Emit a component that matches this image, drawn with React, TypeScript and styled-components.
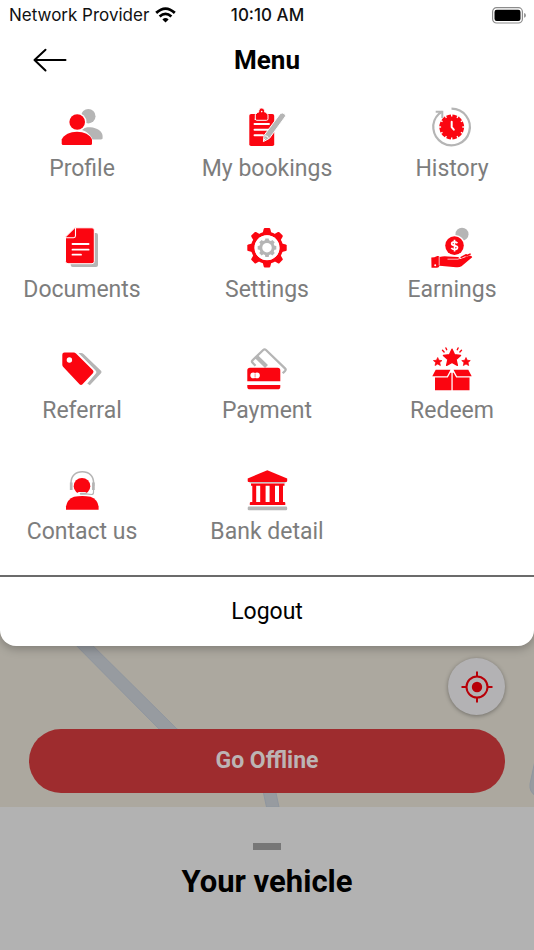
import React from "react";
import styled, { createGlobalStyle } from "styled-components";

const RED = "#fb0510";
const GRAY = "#b5b5b5";

const GlobalStyle = createGlobalStyle`
  * { box-sizing: border-box; }
  body { margin: 0; background: #b2b2b2; font-family: Roboto, "Liberation Sans", sans-serif; }
  button { font: inherit; border: 0; padding: 0; cursor: pointer; }
`;

const Screen = styled.main`
  display: flex;
  flex-direction: column;
  min-height: 100vh;
`;

const MenuSheet = styled.section`
  position: relative;
  z-index: 1;
  background: #fff;
  border-radius: 0 0 16px 16px;
  box-shadow: 0 3px 10px rgba(0, 0, 0, 0.25);
`;

const StatusBar = styled.div`
  display: grid;
  grid-template-columns: 1fr auto 1fr;
  align-items: center;
  height: 30px;
  padding: 0 8px 0 9px;
  font-family: Inter, sans-serif;
  font-size: 17px;
  line-height: 20px;
  color: #111;
`;

const Carrier = styled.div`
  display: flex;
  align-items: center;
  gap: 6px;
  white-space: nowrap;
`;

const Clock = styled.time`
  font-weight: 500;
`;

const Battery = styled.div`
  display: flex;
  justify-content: flex-end;
`;

const Header = styled.header`
  display: grid;
  grid-template-columns: 1fr auto 1fr;
  align-items: center;
  height: 60px;
  padding: 0 32px;
`;

const BackButton = styled.button`
  display: flex;
  justify-self: start;
  background: none;
`;

const Title = styled.h1`
  margin: 0;
  font-size: 26px;
  line-height: 32px;
  font-weight: 700;
  color: #000;
`;

const MenuGrid = styled.nav`
  display: grid;
  grid-template-columns: repeat(3, 1fr);
  column-gap: 35px;
  row-gap: 43px;
  padding: 15px 7px 29px;
`;

const MenuLink = styled.a`
  display: flex;
  flex-direction: column;
  align-items: center;
  gap: 6px;
  font-size: 23px;
  line-height: 28px;
  color: #7d7d7d;
  text-decoration: none;
  white-space: nowrap;
`;

const LogoutButton = styled.button`
  display: block;
  width: 100%;
  height: 71px;
  background: none;
  border-top: 2px solid #6b6b6b;
  && { font-size: 23px; }
  line-height: 28px;
  color: #000;
`;

const MapArea = styled.section`
  position: relative;
  display: flex;
  flex-direction: column;
  gap: 14px;
  margin-top: -20px;
  padding: 32px 29px 14px;
  background: #aca89f;
`;

const Roads = styled.svg`
  position: absolute;
  inset: 0;
  width: 100%;
  height: 100%;
`;

const LocateButton = styled.button`
  position: relative;
  display: flex;
  align-items: center;
  justify-content: center;
  align-self: flex-end;
  width: 57px;
  height: 57px;
  border-radius: 50%;
  background: #b3b2b4;
  box-shadow: 0 1px 4px rgba(0, 0, 0, 0.35);
`;

const OfflineButton = styled.button`
  position: relative;
  height: 64px;
  border-radius: 32px;
  background: #9e2c2e;
  && { font-size: 23px; font-weight: 700; }
  line-height: 28px;
  color: #bcb4b4;
`;

const VehicleSheet = styled.section`
  display: flex;
  flex: 1;
  flex-direction: column;
  align-items: center;
  gap: 14px;
  padding: 36px 16px 48px;
  background: #b2b2b2;
`;

const Grabber = styled.div`
  width: 28px;
  height: 7px;
  background: #777;
`;

const VehicleTitle = styled.h2`
  margin: 0;
  font-size: 31px;
  line-height: 36px;
  font-weight: 700;
  color: #000;
`;

const Icon = ({ children }: { children: React.ReactNode }) => (
  <svg width="44" height="44" viewBox="0 0 44 44" fill="none" aria-hidden="true">
    {children}
  </svg>
);

const range = (n: number) => Array.from({ length: n }, (_, i) => i);

const ProfileIcon = () => (
  <Icon>
    <circle cx="28.3" cy="11.2" r="7.2" fill={GRAY} />
    <path d="M22.5 24.2C25 22.5 27 22 30.5 22.2C37 22.8 42.6 26 42.6 31V33C42.6 34 42 34.4 41 34.4H32.5C31 30 26.5 26.5 22.5 25.2Z" fill={GRAY} />
    <circle cx="17.2" cy="17" r="9.3" fill="#fff" />
    <circle cx="17.2" cy="17" r="7.8" fill={RED} />
    <path d="M1.7 38.5V34.5C4 29.5 10 26.7 17 26.7S30 29.5 32 34.5V38.5Q32 40 30.5 40H3.2Q1.7 40 1.7 38.5Z" fill={RED} />
  </Icon>
);

const BookingsIcon = () => (
  <Icon>
    <rect x="4.3" y="9" width="24.9" height="32" rx="1.8" fill={RED} />
    <path d="M10.3 15V9.5L12.8 7.2H13.6Q13.8 3 16.7 3T19.8 7.2H20.6L23 9.5V13.8Q23 15.3 21.500 15.3H11.8Q10.3 15.3 10.3 13.8Z" fill={RED} stroke="#fff" strokeWidth="1" />
    <circle cx="16.7" cy="6.6" r="0.8" fill="#fff" />
    <path d="M9.5 19H24M9.5 24.7H24M9.5 30.3H18" stroke="#fff" strokeWidth="1.9" strokeLinecap="round" />
    <path d="M19 30.5L35.2 8.7Q37.3 7.2 39.3 8.7T40.2 11.7L24.5 33.3L18.4 36.6Z" fill={GRAY} stroke="#fff" strokeWidth="1" />
    <path d="M20 30.8Q23 30.5 23.5 33.5M19 35L20.5 33.5" stroke="#fff" strokeWidth="1" />
  </Icon>
);

const HistoryIcon = () => (
  <Icon>
    <path d="M21.5 3.7A18.3 18.3 0 1 1 9 8.7L12 6.8" stroke={GRAY} strokeWidth="2.2" />
    <path d="M5.7 6.8H12.3V13" stroke={GRAY} strokeWidth="2" />
    <circle cx="21.7" cy="22" r="12.4" fill={RED} />
    {range(12).map((i) => (
      <path key={i} d="M21.7 9V11.4" stroke="#fff" strokeWidth="1.4" transform={`rotate(${i * 30} 21.7 22)`} />
    ))}
    <path d="M21.7 16.8V22.2L23.8 24.7" stroke="#fff" strokeWidth="2" strokeLinecap="round" strokeLinejoin="round" />
  </Icon>
);

const DocumentsIcon = () => (
  <Icon>
    <rect x="10.7" y="7" width="27.3" height="34" rx="2" fill={GRAY} />
    <path d="M14.8 1.8H32Q34.3 1.8 34.3 4V35.3Q34.3 37.7 32 37.7H8Q5.5 37.7 5.5 35.3V11Z" fill={RED} stroke="#fff" strokeWidth="1" />
    <path d="M15.5 2V9.8Q15.5 11.7 13.6 11.7H6" stroke="#fff" strokeWidth="1.1" />
    <path d="M12.5 18H28.6M12.5 23.7H28.6M12.5 28.7H21" stroke="#fff" strokeWidth="1.8" strokeLinecap="round" />
  </Icon>
);

const SettingsIcon = () => (
  <Icon>
    <g transform="translate(22 21.7)">
      {range(8).map((i) => (
        <path key={i} d="M-4.8 -13L-3.3 -18.8Q-3 -19.7 -2.2 -19.7H2.2Q3 -19.7 3.3 -18.8L4.8 -13Z" fill={RED} transform={`rotate(${i * 45})`} />
      ))}
      <circle r="14.2" stroke={RED} strokeWidth="3.6" />
      <circle r="12.5" fill="#fff" />
      {range(8).map((i) => (
        <path key={i} d="M-2.2 -6L-1.7 -9.3H1.7L2.2 -6Z" fill={GRAY} transform={`rotate(${i * 45})`} />
      ))}
      <circle r="6.2" stroke={GRAY} strokeWidth="2.9" />
    </g>
  </Icon>
);

const EarningsIcon = () => (
  <Icon>
    <circle cx="32" cy="8.2" r="6.5" fill={GRAY} />
    <circle cx="24.5" cy="19.6" r="10.7" fill="#fff" />
    <circle cx="24.5" cy="19.6" r="9.3" fill={RED} />
    <path d="M27.4 17.2Q26.5 15.8 24.5 15.8Q21.7 15.9 21.7 17.7C21.7 20.5 27.6 18.7 27.5 21.6Q27.2 23.5 24.5 23.5Q22.2 23.4 21.4 21.8M24.5 13.8V25.6" stroke="#fff" strokeWidth="1.7" />
    <path d="M1.3 31.5Q4.5 31.5 7.3 30Q9 29.8 9.5 31Q14 29.8 18 30.6L27.5 31Q30 31.2 29.6 33.2L39.3 29.8Q42 29.2 42.2 31.3L31.5 40.2Q29 41.8 26 41.2L9.5 39.7Q8.9 41.6 7 41.7H1.5Z" fill={RED} />
    <path d="M17.5 33.2H28Q29.6 33 29.6 31.4M9.2 31V39.5" stroke="#fff" strokeWidth="0.7" />
    <path d="M31.2 31.4L36.3 28.8M36 30L40 28.2" stroke={RED} strokeWidth="1.6" strokeLinecap="round" />
    <circle cx="5.2" cy="39.2" r="1" fill="#fff" />
  </Icon>
);

const ReferralIcon = () => (
  <Icon>
    <path d="M18.5 6H21Q22.5 6 23.8 7.3L41 23.7Q42.2 25 41 26.3L29.8 38.3L27.3 36.5L36 26.3Q37 25 35.8 23.8Z" fill={GRAY} />
    <path d="M4.5 5.5H13.8Q15 5.5 16 6.5L32.9 23.2Q34.2 24.7 32.9 26.2L22.5 37.3Q21 38.7 19.5 37.3L3.3 20Q2.3 19 2.3 17.8V7.7Q2.3 5.5 4.5 5.5Z" fill={RED} />
    <circle cx="9.4" cy="13" r="2.7" fill="#fff" />
  </Icon>
);

const PaymentIcon = () => (
  <Icon>
    <path d="M10.5 18.8L7.6 15.8Q6.3 14.5 7.6 13.2L18.2 3Q19.6 1.7 21 3L40 21.3Q41.3 22.6 40 24L37.7 26.3" stroke={GRAY} strokeWidth="2.3" />
    <path d="M11.5 9.8L21.5 19.5" stroke={GRAY} strokeWidth="4.2" />
    <path d="M5 20.7H32.7Q35.3 20.7 35.3 23.3V34.3H2.3V23.3Q2.3 20.7 5 20.7ZM2.3 38H35.3V39.7Q35.3 42.3 32.7 42.3H5Q2.3 42.3 2.3 39.7Z" fill={RED} />
    <circle cx="8.2" cy="28.4" r="2.8" fill="#fff" />
    <circle cx="12" cy="28.4" r="2.8" fill="#fff" />
    <path d="M10.1 26.500V30.3" stroke={RED} strokeWidth="0.5" />
  </Icon>
);

const STAR = "M0 -10L2.9 -3.7L9.7 -3L4.6 1.6L6.1 8.3L0 4.9L-6.1 8.3L-4.6 1.6L-9.7 -3L-2.9 -3.7Z";

const RedeemIcon = () => (
  <Icon>
    <g fill={RED} stroke={RED} strokeLinejoin="round">
      <path d={STAR} transform="translate(22 11) scale(.88)" strokeWidth="1.6" />
      <path d={STAR} transform="translate(7.7 14.9) scale(.44)" strokeWidth="1.6" />
      <path d={STAR} transform="translate(36 14.9) scale(.44)" strokeWidth="1.6" />
    </g>
    <path d="M12.5 3.3L14.1 4.9M15.9 1L16.7 2.700M31.5 3.3L29.9 4.9M28.1 1L27.3 2.700" stroke={RED} strokeWidth="1.4" strokeLinecap="round" />
    <path d="M5.7 22.8H20.5L17 29.3H2.3ZM23.5 22.8H38.3L41.7 29.3H27Z" fill={RED} />
    <path d="M5 30.5H17.8L20.4 25.7H21.4V43.3H5ZM22.7 25.7H23.6L26.2 30.5H39.5V43.3H22.7Z" fill={RED} />
  </Icon>
);

const ContactIcon = () => (
  <Icon>
    <circle cx="22" cy="18.2" r="8.3" fill={RED} />
    <path d="M11 18V15C11 8 15.5 3.7 22.3 3.7S33.6 8 33.6 15V18" stroke={GRAY} strokeWidth="1.6" />
    <path d="M11.2 14.5V22M33.4 14.5V22" stroke={GRAY} strokeWidth="2.7" />
    <path d="M19 25.8H25" stroke="#fff" strokeWidth="3.4" strokeLinecap="round" />
    <path d="M33.5 21V24.5Q33.5 26.5 31.5 26.5L26 25.8" stroke={GRAY} strokeWidth="1.2" />
    <path d="M20.8 25.8H25.5" stroke={GRAY} strokeWidth="2.1" strokeLinecap="round" />
    <path d="M6 41.7V38.5Q7.2 31.5 14 28.8Q22.3 27.2 30.5 28.8Q37.5 31.5 38.6 38.5V41.7Z" fill={RED} />
  </Icon>
);

const BankIcon = () => (
  <Icon>
    <path d="M22.3 2.3L42.2 10.5V13Q42.2 14 41 14H3.7Q2.7 14 2.7 13V10.5Z" fill={RED} />
    <path d="M4.5 14.7H40.5" stroke={GRAY} strokeWidth="1" />
    <path d="M6 15.6H39.5V17.7H38V34H39.3Q40.3 34 40.3 35V37H4.8V35Q4.8 34 5.8 34H7.3V17.7H6Z" fill={RED} />
    <path d="M11.2 17.7H15.2V34H11.2ZM20.6 17.7H24.6V34H20.6ZM30 17.7H34V34H30Z" fill="#fff" />
    <rect x="2.7" y="38.6" width="39.5" height="3.7" rx="1.3" fill={GRAY} />
  </Icon>
);

const items = [
  { label: "Profile", Glyph: ProfileIcon },
  { label: "My bookings", Glyph: BookingsIcon },
  { label: "History", Glyph: HistoryIcon },
  { label: "Documents", Glyph: DocumentsIcon },
  { label: "Settings", Glyph: SettingsIcon },
  { label: "Earnings", Glyph: EarningsIcon },
  { label: "Referral", Glyph: ReferralIcon },
  { label: "Payment", Glyph: PaymentIcon },
  { label: "Redeem", Glyph: RedeemIcon },
  { label: "Contact us", Glyph: ContactIcon },
  { label: "Bank detail", Glyph: BankIcon },
];

export default function App() {
  return (
    <Screen>
      <GlobalStyle />
      <MenuSheet>
        <StatusBar>
          <Carrier>
            Network Provider
            <svg width="21" height="16" viewBox="0 0 21 16" fill="#000" aria-hidden="true">
              <path d="M10.5 15.5L7.4 12.4Q10.5 9.8 13.6 12.4Z" />
              <path d="M1.2 5.9Q10.5 -2.6 19.8 5.9M4.6 9.5Q10.5 4.3 16.4 9.5" fill="none" stroke="#000" strokeWidth="2.8" />
            </svg>
          </Carrier>
          <Clock>10:10 AM</Clock>
          <Battery>
            <svg width="34" height="17" viewBox="0 0 34 17" role="img" aria-label="Battery full">
              <rect x="0.6" y="0.7" width="29.8" height="15.3" rx="4" fill="none" stroke="#8c8c8c" strokeWidth="1.2" />
              <rect x="2.5" y="2.7" width="26" height="11.3" rx="2.2" fill="#000" />
              <path d="M32 6Q34 6.5 34 8.4T32 10.8Z" fill="#999" />
            </svg>
          </Battery>
        </StatusBar>
        <Header>
          <BackButton type="button" aria-label="Back">
            <svg width="36" height="26" viewBox="0 0 36 26" fill="none" stroke="#000" strokeWidth="2" strokeLinecap="round" strokeLinejoin="round" aria-hidden="true">
              <path d="M33.5 13H2.5M13.5 2.7L2.5 13L13.5 23.5" />
            </svg>
          </BackButton>
          <Title>Menu</Title>
        </Header>
        <MenuGrid aria-label="Menu">
          {items.map(({ label, Glyph }) => (
            <MenuLink key={label} href="#">
              <Glyph />
              {label}
            </MenuLink>
          ))}
        </MenuGrid>
        <LogoutButton type="button">Logout</LogoutButton>
      </MenuSheet>
      <MapArea aria-label="Map">
        <Roads viewBox="0 0 534 181" preserveAspectRatio="xMidYMax slice" aria-hidden="true">
          <path d="M57 0L159 103L238 142Q256 150 263.5 167L266.5 181H279L276 167Q270 145 240 132L177 103L73 0Z" fill="#979ba0" stroke="#8f969f" strokeWidth="1" />
          <path d="M536 130L530 158Q529 166 536 170Z" fill="#979ba0" stroke="#8f969f" strokeWidth="1" />
        </Roads>
        <LocateButton type="button" aria-label="Show my location">
          <svg width="32" height="32" viewBox="0 0 32 32" fill="none" stroke="#b80008" strokeWidth="2" aria-hidden="true">
            <circle cx="16" cy="16" r="10.5" />
            <circle cx="16" cy="16" r="5.2" fill="#b80008" stroke="none" />
            <path d="M16 0.5V5.5M16 26.5V31.5M0.5 16H5.5M26.5 16H31.5" />
          </svg>
        </LocateButton>
        <OfflineButton type="button">Go Offline</OfflineButton>
      </MapArea>
      <VehicleSheet>
        <Grabber />
        <VehicleTitle>Your vehicle</VehicleTitle>
      </VehicleSheet>
    </Screen>
  );
}
